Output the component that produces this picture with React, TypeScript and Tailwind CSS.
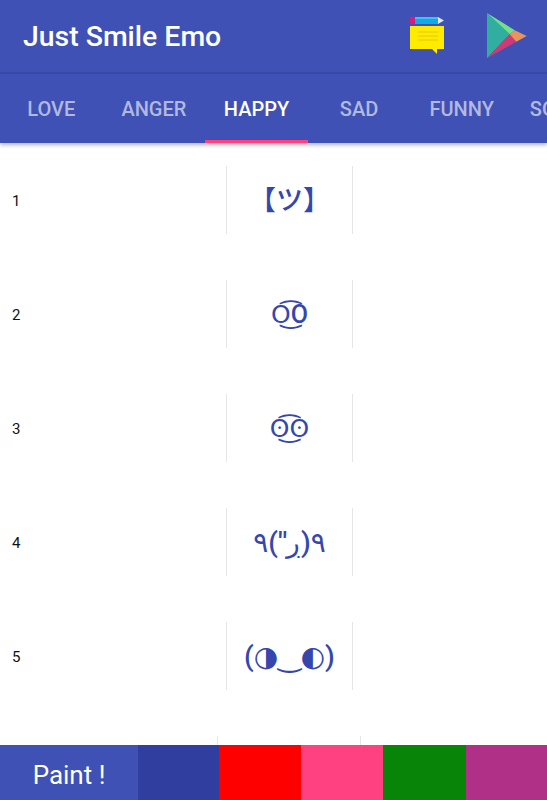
const tabs = ['LOVE', 'ANGER', 'HAPPY', 'SAD', 'FUNNY', 'SOCIAL'];

const rows = [
  { id: 1, emo: '【ツ】', size: 'text-[27px] font-medium' },
  { id: 2, emo: 'O͜͡O', size: 'text-[25px] font-medium' },
  { id: 3, emo: 'ʘ͜͡ʘ', size: 'text-[25px] font-medium' },
  { id: 4, emo: '٩(\'\'ڔ)٩', size: 'text-[28px] font-medium' },
  { id: 5, emo: '(◑‿◐)', size: 'text-[28px] font-medium' },
];

const swatches = [
  'w-[81px] bg-[#303f9f]',
  'w-[82px] bg-[#ff0000]',
  'w-[82px] bg-[#ff4081]',
  'w-[83px] bg-[#088508]',
  'flex-1 bg-[#b03088]',
];

function NotesIcon() {
  return (
    <svg width="36" height="38" viewBox="0 0 36 38" className="block">
      <rect x="1" y="0" width="5" height="7" fill="#d81b7a" />
      <rect x="6" y="0" width="23" height="7" fill="#0fa9e6" />
      <rect x="6" y="0" width="23" height="2" fill="#35c6f4" />
      <path d="M29 0 L35 3.5 L29 7 Z" fill="#dfe6f5" />
      <path d="M1 9 H35 V32 H28 V37 L23 32 H1 Z" fill="#ffeb00" />
      <path d="M9 15 H29 M9 19 H29 M9 23 H29" stroke="#e0c800" strokeWidth="1" />
    </svg>
  );
}

function PlayIcon() {
  return (
    <svg width="40" height="46" viewBox="0 0 40 46" className="block">
      <path d="M0 0 L22.7 21.3 L0 45.3 Z" fill="#30ae9f" />
      <path d="M0 0 L27.7 17.3 L22.7 21.3 Z" fill="#73e08b" />
      <path d="M0 45.3 L29.3 28.7 L22.7 21.3 Z" fill="#cc3b75" />
      <path d="M27.7 17.3 L39.7 23 L29.3 28.7 L22.7 21.3 Z" fill="#e8945a" />
    </svg>
  );
}

export default function App() {
  return (
    <div className="flex h-[800px] w-[547px] flex-col overflow-hidden bg-white font-['Roboto',sans-serif]">
      {/* App bar */}
      <header className="flex h-[74px] shrink-0 items-center border-b-2 border-[#3a4aa8] bg-[#3f51b5] pl-[23px]">
        <h1 className="flex-1 pt-[2px] text-[28.4px] font-medium text-white">Just Smile Emo</h1>
        <div className="mr-[42px]">
          <NotesIcon />
        </div>
        <div className="mr-[20px]">
          <PlayIcon />
        </div>
      </header>

      {/* Tabs */}
      <nav className="relative z-10 flex h-[69px] shrink-0 overflow-hidden bg-[#3f51b5] shadow-[0_2px_4px_rgba(0,0,0,0.3)]">
        {tabs.map((tab) => (
          <div
            key={tab}
            className={
              tab === 'HAPPY'
                ? 'flex w-[102.6px] shrink-0 items-center justify-center border-b-[3px] border-[#ff4081] pt-[4px] text-[20px] font-medium text-white'
                : 'flex w-[102.6px] shrink-0 items-center justify-center border-b-[3px] border-transparent pt-[4px] text-[20px] font-medium text-[#b2b9e1]'
            }
          >
            {tab}
          </div>
        ))}
      </nav>

      {/* Emoticon list */}
      <main className="flex-1 overflow-hidden pt-[23px]">
        {rows.map((row) => (
          <div key={row.id} className="mb-[46px] flex h-[68px] items-center">
            <div className="w-[226px] shrink-0 pl-[12px] pt-[2px] text-[15px] text-[#111]">{row.id}</div>
            <div
              className={`flex h-full w-[127px] items-center justify-center border-x border-[#e6e6e6] pt-[2px] font-['Roboto','DejaVu_Sans','Noto_Sans_CJK_JP',sans-serif] text-[#3547ad] [unicode-bidi:bidi-override] ${row.size}`}
            >
              {row.emo}
            </div>
          </div>
        ))}
        <div className="ml-[217px] h-[20px] w-[144px] border-x border-[#e6e6e6]" />
      </main>

      {/* Paint bar */}
      <footer className="flex h-[55px] shrink-0">
        <div className="flex w-[138px] items-center justify-center bg-[#3f51b5] pt-[5px] text-[26px] text-white">
          Paint !
        </div>
        {swatches.map((swatch) => (
          <div key={swatch} className={swatch} />
        ))}
      </footer>
    </div>
  );
}
